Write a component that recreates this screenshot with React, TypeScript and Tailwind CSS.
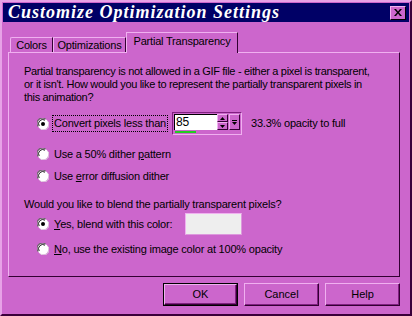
import React from "react";

const font = { fontFamily: '"Liberation Sans", Arial, sans-serif' };

function Radio({ checked }: { checked?: boolean }) {
  return (
    <svg width="12" height="12" viewBox="0 0 12 12" className="shrink-0">
      <circle cx="6" cy="6" r="5.5" fill="#ffffff" />
      <path d="M1.2 8.5 A5.2 5.2 0 0 1 8.5 1.2" stroke="#6b6b6b" strokeWidth="1.2" fill="none" />
      <path d="M2.2 8 A4.2 4.2 0 0 1 8 2.2" stroke="#222" strokeWidth="1" fill="none" />
      <path d="M3.5 10.8 A5.2 5.2 0 0 0 10.8 3.5" stroke="#e0e0e0" strokeWidth="1" fill="none" />
      {checked && <circle cx="6" cy="6" r="2" fill="#000" />}
    </svg>
  );
}

function Btn({ children, def }: { children: React.ReactNode; def?: boolean }) {
  return (
    <div
      className={
        "w-[75px] h-[23px] flex items-center justify-center text-[11px] text-black bg-[#cc66cc] " +
        (def ? "border border-black" : "")
      }
    >
      <div className="w-full h-full flex items-center justify-center border-t border-l border-t-[#f0b0f0] border-l-[#f0b0f0] border-r border-b border-r-[#330033] border-b-[#330033] shadow-[inset_-1px_-1px_0_#802080]">
        {children}
      </div>
    </div>
  );
}

export default function App() {
  return (
    <div
      className="w-[412px] h-[316px] bg-[#cc66cc] border-t-2 border-l-2 border-r-2 border-b-2 border-t-[#e7a2e7] border-l-[#e7a2e7] border-r-[#3a003a] border-b-[#3a003a] p-px flex flex-col text-black"
      style={font}
    >
      {/* title bar */}
      <div className="h-[19px] bg-[#000066] flex items-center justify-between pl-[5px] pr-[3px]">
        <span
          className="text-white text-[18px] font-bold italic tracking-[1px] leading-[19px]"
          style={{ fontFamily: '"Liberation Serif", serif' }}
        >
          Customize Optimization Settings
        </span>
        <div className="w-[16px] h-[14px] bg-[#cc66cc] border-t border-l border-t-[#f0b0f0] border-l-[#f0b0f0] border-r border-b border-r-black border-b-black flex items-center justify-center">
          <svg width="8" height="7" viewBox="0 0 8 7">
            <path d="M0 0h2l2 2.5L6 0h2L5 3.5 8 7H6L4 4.5 2 7H0l3-3.5z" fill="#000" />
          </svg>
        </div>
      </div>

      {/* tabs */}
      <div className="flex items-end h-[30px] pl-[7px] text-[11px] tracking-[-0.2px]">
        <div className="h-[15px] w-[43px] pt-[1px] flex items-center justify-center border-t border-l border-t-[#f0b0f0] border-l-[#f0b0f0] border-r border-r-[#330033] rounded-tl-[2px]">
          Colors
        </div>
        <div className="h-[15px] w-[73px] pt-[1px] flex items-center justify-center border-t border-l border-t-[#f0b0f0] border-l-[#f0b0f0] border-r border-r-[#330033]">
          Optimizations
        </div>
        <div className="h-[21px] w-[112px] -mb-px relative z-10 bg-[#cc66cc] flex items-center justify-center border-t border-l border-t-[#f0b0f0] border-l-[#f0b0f0] border-r border-r-[#330033] pb-[3px]">
          Partial Transparency
        </div>
      </div>

      {/* panel */}
      <div className="ml-[5px] w-[392px] h-[225px] border-t border-l border-t-[#f0b0f0] border-l-[#f0b0f0] border-r border-b border-r-[#330033] border-b-[#330033] text-[11px] leading-[13px] tracking-[-0.2px] pl-[15px] pt-[12px]">
        <p className="whitespace-nowrap tracking-[-0.32px]">
          Partial transparency is not allowed in a GIF file - either a pixel is transparent,
          <br />
          or it isn't. How would you like to represent the partially transparent pixels in
          <br />
          this animation?
        </p>

        <div className="flex items-center mt-[8px] ml-[13px] h-[23px]">
          <Radio checked />
          <div className="ml-[3px] px-[1px] border border-dotted border-black h-[17px] flex items-center">
            <span>Convert pixels less than</span>
          </div>
          <div className="ml-[4px] w-[70px] h-[23px] border-t border-l border-t-[#802080] border-l-[#802080] border-r border-b border-r-[#f0b0f0] border-b-[#f0b0f0] p-[1px] flex flex-col">
            <div className="flex h-[16px]">
              <div className="w-[43px] h-[16px] bg-white border-t border-l border-black text-[12px] pl-[1px] leading-[14px]">85</div>
              <div className="w-[11px] flex flex-col">
                <div className="h-[8px] bg-[#cc66cc] border-t border-l border-t-[#f0b0f0] border-l-[#f0b0f0] border-r border-b border-r-[#330033] border-b-[#330033] flex items-center justify-center">
                  <svg width="5" height="3"><path d="M2.5 0L5 3H0z" fill="#000" /></svg>
                </div>
                <div className="h-[8px] bg-[#cc66cc] border-t border-l border-t-[#f0b0f0] border-l-[#f0b0f0] border-r border-b border-r-[#330033] border-b-[#330033] flex items-center justify-center">
                  <svg width="5" height="3"><path d="M0 0h5L2.5 3z" fill="#000" /></svg>
                </div>
              </div>
              <div className="ml-px w-[11px] h-[16px] bg-[#cc66cc] border-t border-l border-t-[#f0b0f0] border-l-[#f0b0f0] border-r border-b border-r-[#330033] border-b-[#330033] flex flex-col items-center justify-center gap-[1px]">
                <div className="w-[5px] h-px bg-black" />
                <svg width="5" height="3"><path d="M0 0h5L2.5 3z" fill="#000" /></svg>
              </div>
            </div>
            <div className="mt-[1px] ml-[1px] w-[21px] h-[3px] bg-[#22cc22]" />
          </div>
          <span className="ml-[9px]">33.3% opacity to full</span>
        </div>

        <div className="flex items-center mt-[12px] ml-[13px] h-[14px]">
          <Radio />
          <span className="ml-[5px]">
            Use a 50% dither <u>p</u>attern
          </span>
        </div>
        <div className="flex items-center mt-[8px] ml-[13px] h-[14px]">
          <Radio />
          <span className="ml-[5px]">
            Use <u>e</u>rror diffusion dither
          </span>
        </div>

        <p className="mt-[15px]">Would you like to blend the partially transparent pixels?</p>

        <div className="flex items-center mt-[2px] ml-[13px] h-[22px]">
          <Radio checked />
          <span className="ml-[5px] w-[131px]">
            <u>Y</u>es, blend with this color:
          </span>
          <div className="w-[57px] h-[22px] bg-[#eeeeee] border-t border-l border-t-[#f0b0f0] border-l-[#f0b0f0] border-r border-b border-r-[#dd99dd] border-b-[#dd99dd]" />
        </div>
        <div className="flex items-center mt-[7px] ml-[13px] h-[14px]">
          <Radio />
          <span className="ml-[5px]">
            <u>N</u>o, use the existing image color at 100% opacity
          </span>
        </div>
      </div>

      {/* buttons */}
      <div className="flex justify-end gap-[6px] pr-[9px] mt-[6px]">
        <Btn def>OK</Btn>
        <Btn>Cancel</Btn>
        <Btn>Help</Btn>
      </div>
    </div>
  );
}
